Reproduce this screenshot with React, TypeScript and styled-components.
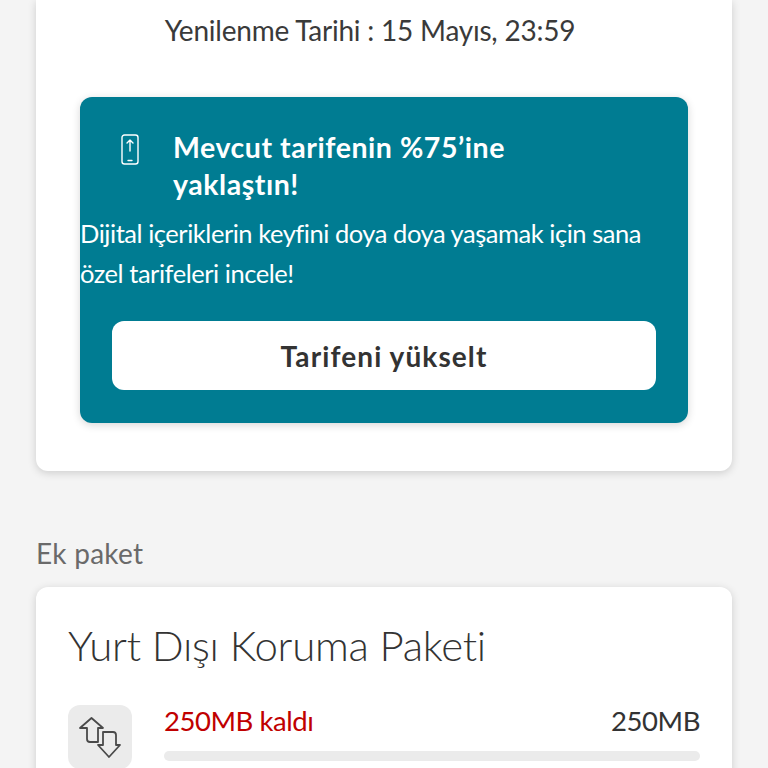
import React from "react";
import styled, { createGlobalStyle } from "styled-components";

const Global = createGlobalStyle`
  html, body { margin: 0; padding: 0; background: #f4f4f4; }
  body { font-family: "Lato", "Open Sans", sans-serif; color: #333; }
`;
const Page = styled.div`
  width: 768px; height: 768px; overflow: hidden; box-sizing: border-box;
  padding: 0 36px; display: flex; flex-direction: column; background: #f4f4f4;
`;
const Card = styled.section`
  background: #fff; border-radius: 0 0 12px 12px; box-sizing: border-box;
  box-shadow: 0 2px 8px rgba(0,0,0,.16); flex: none;
`;
const TopCard = styled(Card)`
  height: 471px; padding: 12px 44px 0; display: flex; flex-direction: column;
`;
const Renewal = styled.p`
  margin: 0; padding-right: 28px; height: 36px; line-height: 36px; text-align: center; font-size: 28px; font-weight: 400;
  color: #3a3a3a; letter-spacing: -.22px; white-space: nowrap;
`;
const Promo = styled.div`
  margin-top: 49px; height: 326px; box-sizing: border-box; background: #007c92; border-radius: 12px;
  box-shadow: 0 2px 8px rgba(0,0,0,.16); padding: 32px 0 32px; color: #fff; display: flex; flex-direction: column;
`;
const PromoHead = styled.div`
  display: flex; padding-left: 40px; gap: 32px;
`;
const PhoneIcon = styled.svg`
  width: 21px; height: 32px; flex: none; margin-top: 5px;
`;
const PromoTitle = styled.h2`
  margin: 0; font-size: 28.5px; line-height: 37px; font-weight: 700; letter-spacing: .55px;
  width: 350px;
`;
const PromoText = styled.p`
  margin: 10px 0 0; font-size: 25.5px; line-height: 40px; letter-spacing: -.46px; font-weight: 400; white-space: pre-line;
`;
const UpgradeButton = styled.button`
  margin: 28px 32px 0; height: 69px; flex: none; border: 0; border-radius: 12px; background: #fff; color: #333;
  font: 700 28px "Lato", sans-serif; letter-spacing: 1.1px;
`;
const SectionLabel = styled.h3`
  margin: 64px 0 16px; height: 36px; line-height: 36px; font-size: 28px; font-weight: 400; color: #6a6a6a; letter-spacing: .25px;
`;
const PackCard = styled(Card)`
  border-radius: 12px; padding: 30px 32px 0; height: 240px;
`;
const PackTitle = styled.h2`
  margin: 0; font-size: 42px; line-height: 56px; font-weight: 300; color: #333; letter-spacing: -.3px;
`;
const UsageRow = styled.div`
  margin-top: 32px; display: flex; gap: 32px;
`;
const IconTile = styled.div`
  width: 64px; height: 64px; flex: none; border-radius: 12px; background: #ebebeb;
  display: flex;
`;
const Usage = styled.div`
  flex: 1; display: flex; flex-direction: column; margin-top: -2px;
`;
const UsageText = styled.div`
  display: flex; justify-content: space-between; font-size: 27.5px; line-height: 36px; letter-spacing: -.45px;
`;
const Left = styled.span`color: #c00000;`;
const Total = styled.span`color: #333;`;
const Track = styled.div`
  margin-top: 12px; height: 10px; border-radius: 5px; background: #ebebeb;
`;

export default function App() {
  return (
    <Page>
      <Global />
      <TopCard>
        <Renewal>Yenilenme Tarihi : 15 Mayıs, 23:59</Renewal>
        <Promo>
          <PromoHead>
            <PhoneIcon viewBox="0 0 21 32" fill="none" stroke="#fff" strokeWidth="1.4" strokeLinecap="round" strokeLinejoin="round">
              <rect x="2" y="1" width="16" height="29" rx="2.5" />
              <path d="M10 17V6M7 9l3-3 3 3" />
              <path d="M8 26.5h4" />
            </PhoneIcon>
            <PromoTitle>Mevcut tarifenin %75’ine yaklaştın!</PromoTitle>
          </PromoHead>
          <PromoText>{"Dijital içeriklerin keyfini doya doya yaşamak için sana\nözel tarifeleri incele!"}</PromoText>
          <UpgradeButton>Tarifeni yükselt</UpgradeButton>
        </Promo>
      </TopCard>
      <SectionLabel>Ek paket</SectionLabel>
      <PackCard>
        <PackTitle>Yurt Dışı Koruma Paketi</PackTitle>
        <UsageRow>
          <IconTile>
            <svg width="64" height="64" viewBox="0 0 64 64" fill="none" stroke="#4a4a4a" strokeWidth="1.8" strokeLinejoin="round" strokeLinecap="round">
              <path d="M19 23H12L23.5 13 35 23H30V37H22q-3 0-3-3V23" />
              <path d="M35 40V27H45q3 0 3 3V40H52L41 52 30 40Z" />
            </svg>
          </IconTile>
          <Usage>
            <UsageText>
              <Left>250MB kaldı</Left>
              <Total>250MB</Total>
            </UsageText>
            <Track />
          </Usage>
        </UsageRow>
      </PackCard>
    </Page>
  );
}
